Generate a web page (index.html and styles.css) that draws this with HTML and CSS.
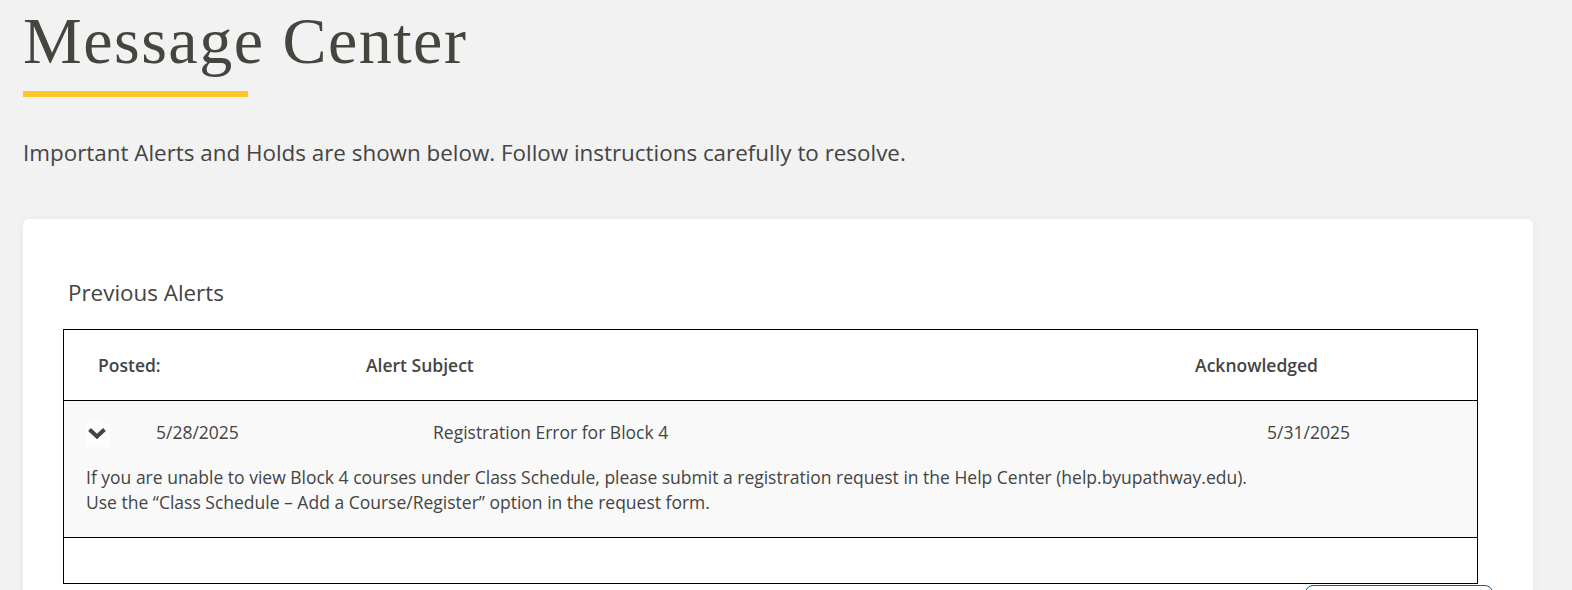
FILE: index.html
```html
<!DOCTYPE html>
<html lang="en">
<head>
<meta charset="utf-8">
<title>Message Center</title>
<link rel="stylesheet" href="styles.css">
</head>
<body>
<main class="page">
  <h1 class="page-title">Message Center</h1>
  <div class="title-bar"></div>
  <p class="intro">Important Alerts and Holds are shown below. Follow instructions carefully to resolve.</p>

  <section class="card">
    <h2 class="section-title">Previous Alerts</h2>
    <div class="alerts-table">
      <div class="table-head">
        <div class="th">Posted:</div>
        <div class="th">Alert Subject</div>
        <div class="th th-ack">Acknowledged</div>
      </div>
      <div class="alert-row">
        <div class="alert-summary">
          <button class="toggle" type="button" aria-label="Collapse">
            <svg width="24" height="24" viewBox="0 0 24 24" aria-hidden="true">
              <polyline points="3.5,6.5 11,13.5 18.5,6.5" fill="none" stroke="#444" stroke-width="4" stroke-linejoin="miter"/>
            </svg>
          </button>
          <span class="cell">5/28/2025</span>
          <span class="cell">Registration Error for Block 4</span>
          <span class="cell cell-ack">5/31/2025</span>
        </div>
        <div class="alert-body">
          <p>If you are unable to view Block 4 courses under Class Schedule, please submit a registration request in the Help Center (help.byupathway.edu).</p>
          <p>Use the “Class Schedule – Add a Course/Register” option in the request form.</p>
        </div>
      </div>
      <div class="empty-row"></div>
    </div>
    <div class="card-actions">
      <button class="outline-btn" type="button"></button>
    </div>
  </section>
</main>
</body>
</html>
```

FILE: styles.css
```css
* { box-sizing: border-box; }

html, body {
  margin: 0;
  padding: 0;
  background: #f2f2f2;
}

body {
  font-family: "Open Sans", "Liberation Sans", sans-serif;
  color: #444444;
  overflow: hidden;
}

.page {
  padding: 3px 39px 0 23px;
}

.page-title {
  margin: 0;
  font-family: "Liberation Serif", "DejaVu Serif", serif;
  font-weight: 400;
  font-size: 66px;
  line-height: 76px;
  color: #45443e;
  letter-spacing: 1.5px;
}

.title-bar {
  width: 225px;
  height: 6px;
  margin-top: 12px;
  background: #ffc629;
}

.intro {
  margin: 40px 0 0 0;
  font-size: 22.4px;
  line-height: 32px;
}

.card {
  margin-top: 50px;
  background: #ffffff;
  border-radius: 6px;
  box-shadow: 0 0 8px rgba(0, 0, 0, 0.05);
  padding: 58px 55px 0 40px;
}

.section-title {
  margin: 0;
  padding-left: 5px;
  font-size: 22.4px;
  line-height: 32px;
  font-weight: 400;
  color: #444444;
}

.alerts-table {
  margin-top: 20px;
  border: 1px solid #000000;
}

.table-head {
  display: grid;
  grid-template-columns: 268px 1fr auto;
  align-items: center;
  height: 71px;
  padding: 0 159px 0 34px;
  border-bottom: 1px solid #000000;
  background: #ffffff;
}

.th {
  font-size: 17.5px;
  font-weight: 600;
  line-height: 24px;
}

.alert-row {
  background: #f9f9f9;
  border-bottom: 1px solid #000000;
  padding: 19px 127px 22px 22px;
}

.alert-summary {
  display: grid;
  grid-template-columns: 70px 277px 1fr auto;
  align-items: start;
  height: 24px;
}

.toggle {
  width: 24px;
  height: 24px;
  margin-top: 3px;
  padding: 0;
  border: 0;
  background: #fdfdfd;
  display: flex;
}

.cell {
  font-size: 17.5px;
  line-height: 24px;
}

.alert-body {
  margin-top: 21px;
}

.alert-body p {
  margin: 0;
  font-size: 17.5px;
  line-height: 25px;
}

.empty-row {
  height: 45px;
  background: #ffffff;
}

.card-actions {
  display: flex;
  justify-content: flex-end;
  margin-right: -15px;
  padding-top: 1px;
}

.outline-btn {
  width: 188px;
  height: 40px;
  border: 1px solid #1c5a7d;
  border-radius: 8px;
  background: #ffffff;
}
```
